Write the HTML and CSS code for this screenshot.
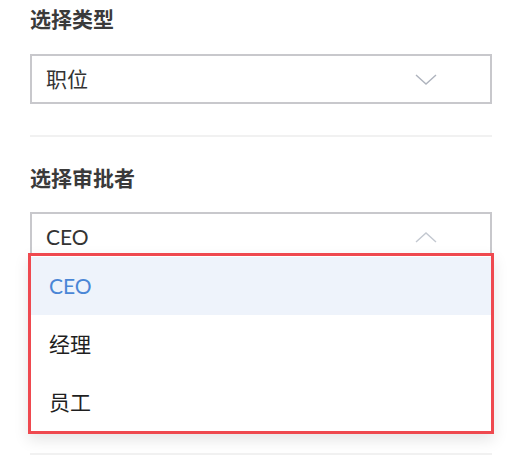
FILE: index.html
```html
<!DOCTYPE html>
<html lang="zh-CN">
<head>
<meta charset="utf-8">
<title>选择审批者</title>
<link rel="stylesheet" href="styles.css">
</head>
<body>
<div class="page">
  <section class="section section-first">
    <h2 class="title">选择类型</h2>
    <div class="select">
      <span class="select-value">职位</span>
      <svg class="chevron" width="22" height="11" viewBox="0 0 22 11"><path d="M1 1 L11 10 L21 1" fill="none" stroke="#aeb3bd" stroke-width="1.4"/></svg>
    </div>
  </section>
  <div class="divider"></div>
  <section class="section">
    <h2 class="title">选择审批者</h2>
    <div class="select">
      <span class="select-value">CEO</span>
      <svg class="chevron" width="22" height="11" viewBox="0 0 22 11"><path d="M1 10 L11 1 L21 10" fill="none" stroke="#c3c8d0" stroke-width="1.4"/></svg>
    </div>
    <ul class="dropdown">
      <li class="option active">CEO</li>
      <li class="option">经理</li>
      <li class="option">员工</li>
    </ul>
  </section>
  <div class="divider"></div>
</div>
</body>
</html>
```
FILE: styles.css
```css
* { box-sizing: border-box; }
html, body { margin: 0; padding: 0; background: #ffffff; }
body {
  font-family: Lato, "Noto Sans CJK SC", sans-serif;
  font-size: 21px;
  color: #333333;
}
.page {
  width: 462px;
  margin-left: 30px;
}
.section {
  display: flex;
  flex-direction: column;
}
.section-first { padding-top: 5px; }
.title {
  margin: 0 0 21px 0;
  font-size: 21px;
  line-height: 28px;
  font-weight: 700;
  color: #3a3a3a;
}
.section + .divider + .section .title { margin-top: 27px; margin-bottom: 20px; }
.select {
  height: 50px;
  border: 2px solid #c8c8cc;
  display: flex;
  align-items: center;
  justify-content: space-between;
  padding: 0 53px 0 14px;
}
.select-value { line-height: 28px; color: #333333; }
.chevron { display: block; }
.divider {
  height: 2px;
  background: #f1f1f1;
  margin-top: 31px;
}
.dropdown {
  position: relative;
  z-index: 2;
  list-style: none;
  margin: -9px -2px 19px -2px;
  padding: 1px 0 0 0;
  width: 466px;
  border: 3px solid #ef494f;
  background: #ffffff;
  box-shadow: 0 6px 14px rgba(0, 0, 0, 0.10);
}
.section:last-of-type + .divider { margin-top: 0; }
.option {
  height: 58px;
  line-height: 58px;
  padding-left: 18px;
  color: #1f1f1f;
}
.option.active {
  background: #eef3fb;
  color: #4a86d6;
}
```
